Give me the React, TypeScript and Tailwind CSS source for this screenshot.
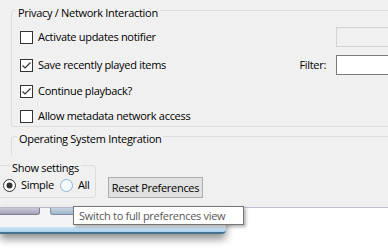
import React from "react";

function CheckBox({ checked }: { checked?: boolean }) {
  return (
    <svg width="13" height="13" viewBox="0 0 13 13" className="shrink-0">
      <rect x="0.5" y="0.5" width="12" height="12" fill="#ffffff" stroke="#333333" />
      {checked && (
        <path d="M2.5 6.5 L5 9 L10.5 3.5" fill="none" stroke="#333333" strokeWidth="1.2" />
      )}
    </svg>
  );
}

function Radio({ checked, hover }: { checked?: boolean; hover?: boolean }) {
  return (
    <svg width="13" height="13" viewBox="0 0 13 13" className="shrink-0">
      <circle cx="6.5" cy="6.5" r="6" fill={hover ? "#f4f9fd" : "#ffffff"} stroke={hover ? "#8fb4d0" : "#333333"} />
      {checked && <circle cx="6.5" cy="6.5" r="3" fill="#333333" />}
    </svg>
  );
}

function Row({ checked, label, h }: { checked?: boolean; label: string; h: string }) {
  return (
    <div className={`flex items-center gap-[5px] ${h}`}>
      <CheckBox checked={checked} />
      <span>{label}</span>
    </div>
  );
}

export default function App() {
  return (
    <div
      className="relative w-[388px] h-[251px] overflow-hidden bg-white text-[11px] leading-[14px] tracking-[-0.3px] text-black"
      style={{ fontFamily: '"Open Sans", "Noto Sans", sans-serif' }}
    >
      <div className="h-[208px] bg-[#f0f0f0] border-b border-[#c4c0d4] overflow-hidden">
        <div className="h-[156px] overflow-hidden">
          <fieldset className="mt-[1px] ml-[11px] w-[420px] border border-[#dcdcdc] rounded-[3px] pl-[8px] pr-[8px] pt-[7px] pb-[2px]">
            <legend className="-ml-[4px] px-[2px] pt-[5px] leading-[14px] whitespace-nowrap">Privacy / Network Interaction</legend>
            <div className="flex items-center justify-between h-[20px]">
              <div className="flex items-center gap-[5px]">
                <CheckBox />
                <span>Activate updates notifier</span>
              </div>
              <div className="w-[86px] h-[20px] border border-[#d4d4d4] bg-[#f0f0f0]" />
            </div>
            <div className="flex items-center justify-between h-[20px] mt-[8px]">
              <div className="flex items-center gap-[5px]">
                <CheckBox checked />
                <span>Save recently played items</span>
              </div>
              <div className="flex items-center gap-[10px]">
                <span>Filter:</span>
                <div className="w-[86px] h-[20px] border border-[#7a7a7a] bg-white" />
              </div>
            </div>
            <div className="mt-[8px]">
              <Row checked label="Continue playback?" h="h-[16px]" />
            </div>
            <div className="mt-[9px]">
              <Row label="Allow metadata network access" h="h-[16px]" />
            </div>
          </fieldset>

          <fieldset className="mt-[0px] ml-[11px] w-[420px] h-[60px] border border-[#dcdcdc] rounded-[3px] pl-[8px]">
            <legend className="-ml-[3px] px-[2px] pt-[5px] leading-[14px] whitespace-nowrap">Operating System Integration</legend>
          </fieldset>
        </div>

        <div className="flex items-end gap-[12px]">
          <fieldset className="-ml-[20px] w-[116px] border border-[#dcdcdc] rounded-[3px] pl-[22px] pb-[2px]">
            <legend className="ml-[7px] px-[2px] pt-[5px] leading-[14px] whitespace-nowrap">Show settings</legend>
            <div className="flex items-center h-[20px] whitespace-nowrap">
              <Radio checked />
              <span className="ml-[5px]">Simple</span>
              <span className="ml-[6px]"><Radio hover /></span>
              <span className="ml-[5px]">All</span>
            </div>
          </fieldset>
          <button className="w-[95px] h-[21px] border border-[#adadad] bg-[#e1e1e1] flex items-center justify-center leading-[14px] whitespace-nowrap">
            Reset Preferences
          </button>
        </div>
      </div>

      <div className="flex">
        <div className="w-[226px] shadow-[0_5px_8px_rgba(0,0,0,0.45)] rounded-br-[4px]">
          <div className="h-[19px] bg-[#f4f4f6] flex items-start">
            <div className="w-[40px] h-[7px] bg-gradient-to-b from-[#c8c8d4] to-[#a4a4b8] border-b border-r border-[#7e7e92] rounded-br-[3px]" />
            <div className="ml-[10px] w-[26px] h-[7px] bg-gradient-to-b from-[#c8d4e0] to-[#9fb6cc] border border-t-0 border-[#7e8ea2] rounded-b-[3px]" />
          </div>
          <div className="h-[7px] bg-gradient-to-b from-[#cfe6f6] to-[#a9d0ec] border-b-2 border-[#46718f] rounded-br-[4px]" />
        </div>
      </div>

      <div className="absolute left-[73px] top-[206px] w-[171px] h-[19px] bg-white border border-[#767676] text-[#575757] pl-[5px] flex items-center whitespace-nowrap shadow-[2px_2px_3px_rgba(0,0,0,0.3)]">
        Switch to full preferences view
      </div>
    </div>
  );
}
